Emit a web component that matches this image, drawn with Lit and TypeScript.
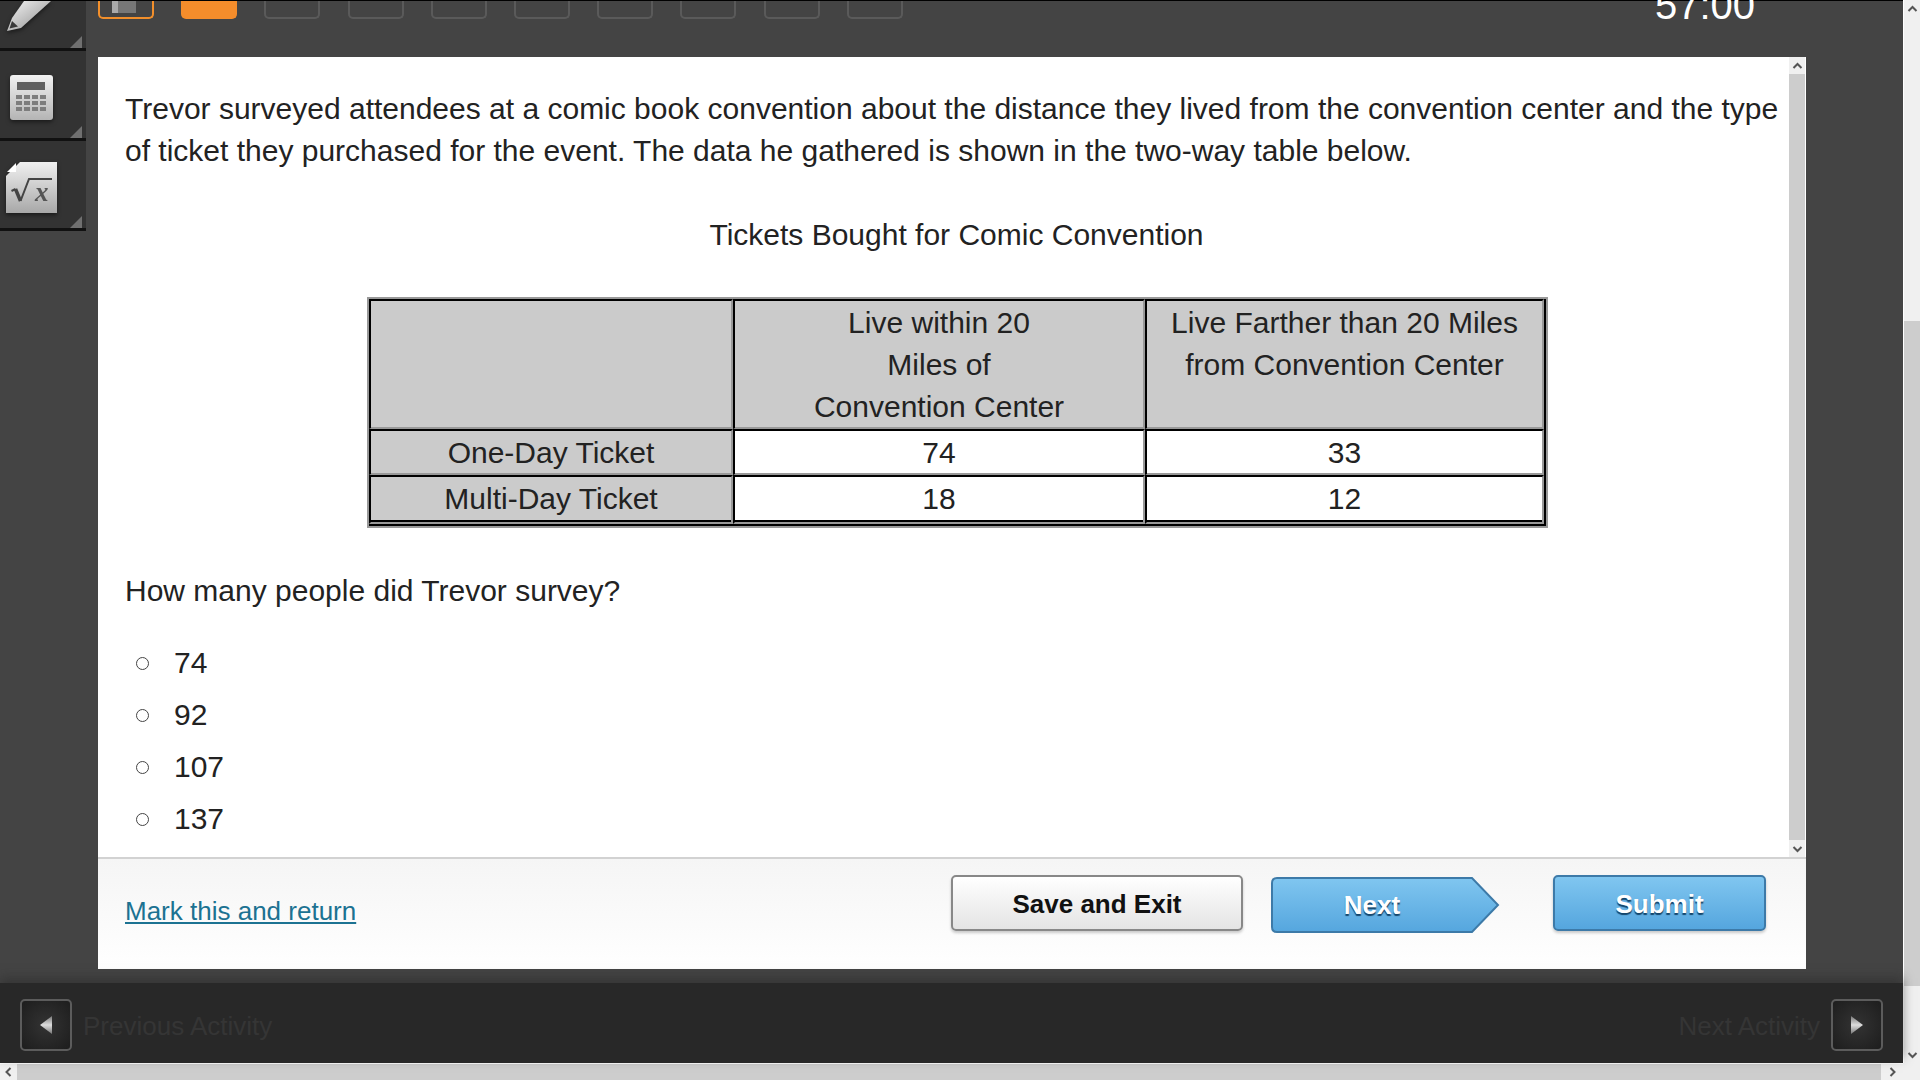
import { LitElement, html, css, svg } from 'lit';
import { customElement } from 'lit/decorators.js';

const chevron = (rot: number) => html`<svg width="11" height="8" viewBox="0 0 11 8" style="transform: rotate(${rot}deg)">
  <path d="M1.5 6 L5.5 2 L9.5 6" fill="none" stroke="#555" stroke-width="2"></path>
</svg>`;

const pencil = svg`<svg class="icon" width="54" height="30" viewBox="0 0 54 30">
  <defs><linearGradient id="pen" x1="0" y1="0" x2="1" y2="1"><stop offset="0" stop-color="#f6f6f6"></stop><stop offset="1" stop-color="#8a8a8a"></stop></linearGradient></defs>
  <path d="M18 0 H45 L15 27 L1 30 L6 17 Z" fill="url(#pen)"></path>
  <path d="M6 20 L12 25.5 L3.5 27.5 Z" fill="#3a3a3a"></path>
</svg>`;

const calc = svg`<svg class="icon" width="43" height="45" viewBox="0 0 43 45">
  <defs><linearGradient id="cal" x1="0" y1="0" x2="0" y2="1"><stop offset="0" stop-color="#f2f2f2"></stop><stop offset="1" stop-color="#b4b4b4"></stop></linearGradient></defs>
  <rect x="0" y="0" width="43" height="45" rx="3" fill="url(#cal)"></rect>
  <rect x="7" y="7" width="28" height="8" fill="#606060"></rect>
  ${[20, 26, 32].map(y => [6, 14, 22, 30].map(x => svg`<rect x=${x} y=${y} width="6" height="4" fill="#7d7d7d"></rect>`))}
</svg>`;

const sqrt = svg`<svg class="icon" width="51" height="51" viewBox="0 0 51 51">
  <defs><linearGradient id="sq" x1="0" y1="0" x2="0" y2="1"><stop offset="0" stop-color="#f0f0f0"></stop><stop offset="1" stop-color="#a8a8a8"></stop></linearGradient></defs>
  <path d="M14 0 H51 V51 H0 V14 Z" fill="url(#sq)"></path>
  <path d="M1 10 L10 1 V10 Z" fill="#fff"></path>
  <path d="M5.5 29 L9.5 27 M14.5 39 L23 17 H46" fill="none" stroke="#444" stroke-width="2"></path>
  <path d="M9.5 27 L14.5 39" fill="none" stroke="#444" stroke-width="3.5"></path>
  <text x="29" y="39" font-family="Liberation Serif, serif" font-style="italic" font-weight="700" font-size="27" fill="#555">x</text>
</svg>`;

const navArrow = (left: boolean) => svg`<svg width="12" height="18" viewBox="0 0 12 18">
  <defs><linearGradient id="na" x1="0" y1="0" x2="0" y2="1"><stop offset="0" stop-color="#777"></stop><stop offset=".5" stop-color="#ddd"></stop><stop offset="1" stop-color="#777"></stop></linearGradient></defs>
  <path d=${left ? 'M12 0 V18 L0 9 Z' : 'M0 0 V18 L12 9 Z'} fill="url(#na)"></path>
</svg>`;

@customElement('app-root')
export class AppRoot extends LitElement {
  static styles = css`
    :host {
      display: block;
      width: 1920px;
      height: 1080px;
      overflow: hidden;
      font-family: "Liberation Sans", Arial, sans-serif;
      background: #f0f0f0;
    }
    .frame { display: grid; grid-template-columns: 1903px 17px; grid-template-rows: 1063px 17px; height: 1080px; }

    .viewport { display: flex; flex-direction: column; background: #444; border-top: 1px solid #000; box-sizing: border-box; min-height: 0; }
    .workspace { flex: 1; display: flex; min-height: 0; }

    .tools { width: 86px; flex: none; display: flex; flex-direction: column; }
    .tool {
      height: 90px;
      box-sizing: border-box;
      background: #333;
      border-bottom: 3px solid #111;
      position: relative;
      display: flex;
      align-items: center;
      padding: 6px 0 0 6px;
    }
    .tool.first { height: 50px; align-items: flex-start; padding-top: 0; overflow: hidden; }
    .tool::after {
      content: '';
      position: absolute;
      right: 4px;
      bottom: 0;
      border-style: solid;
      border-width: 0 0 12px 12px;
      border-color: transparent transparent #707070 transparent;
    }
    .tool.calc { padding: 5px 0 0 10px; }
    .icon { filter: drop-shadow(0 2px 2px rgba(0, 0, 0, .5)); }

    .main { flex: 1; display: flex; flex-direction: column; padding: 0 97px 14px 12px; min-width: 0; position: relative; }
    .tabs { height: 56px; flex: none; display: flex; gap: 27.2px; align-items: flex-start; }
    .tab {
      width: 56px;
      height: 18px;
      box-sizing: border-box;
      border: 2px solid #5a5a5a;
      border-top: none;
      border-radius: 0 0 5px 5px;
      position: relative;
    }
    .tab.current { border-color: #f28f2b; }
    .tab.current::after {
      content: '';
      position: absolute;
      left: 12px;
      top: 0;
      width: 24px;
      height: 12px;
      background: linear-gradient(90deg, #aaa 0 6px, #777 6px);
    }
    .tab.flagged { background: #f58d2b; border-color: #f58d2b; }
    .timer {
      position: absolute;
      top: -16px;
      right: 148px;
      color: #fff;
      font-size: 40px;
      line-height: 40px;
    }

    .card { flex: 1; display: flex; flex-direction: column; background: #fff; min-height: 0; }
    .pane { flex: 1; display: flex; min-height: 0; }
    .content { flex: 1; padding: 31px 1px 0 27px; color: #222; font-size: 30px; line-height: 42px; min-width: 0; overflow: hidden; }
    .content p { margin: 0; }
    .content p.title { text-align: center; margin: 42px 0 41px; }
    .table-wrap { padding: 2px 0 2px 244px; }
    table {
      border-collapse: separate;
      border-spacing: 0;
      border: solid #000;
      border-width: 0 2px 2px 0;
      outline: 2px solid #999;
      width: 1177px;
      text-align: center;
      table-layout: fixed;
    }
    col.c1 { width: 364px; }
    col.c2 { width: 412px; }
    td {
      padding: 1px 0 0;
      border: solid;
      border-width: 2px 2px 1px;
      border-color: #000 #999 #999 #000;
      box-shadow: inset 0 -1px #999;
      background: #fff;
      vertical-align: top;
    }
    td.head { background: #cbcbcb; }
    tr.last td { padding-bottom: 2px; border-bottom-width: 2px; box-shadow: inset 0 -2px #000; }
    .content p.question { margin: 42px 0 25px; }
    .choice { display: flex; align-items: center; height: 52px; }
    .radio { width: 11px; height: 11px; border: 1px solid #444; border-radius: 50%; margin: 0 25px 0 11px; }
    .choice span { line-height: 52px; }

    .pane-bar { width: 16px; margin-right: 1px; flex: none; display: flex; flex-direction: column; background: #f0f0f0; }
    .arrow { height: 17px; display: flex; align-items: center; justify-content: center; flex: none; }
    .thumb { flex: 1; background: #cdcdcd; }

    .footer {
      height: 112px;
      flex: none;
      box-sizing: border-box;
      border-top: 2px solid #d2d2d2;
      background: linear-gradient(#f5f5f5, #fff);
      display: flex;
      align-items: flex-start;
      padding: 16px 40px 0 27px;
    }
    .mark { color: #1c7292; font-size: 26px; text-decoration: underline; margin-top: 21px; line-height: 30px; }
    .spacer { flex: 1; }
    .btn {
      box-sizing: border-box;
      height: 56px;
      padding-top: 2px;
      font-size: 26px;
      font-weight: 700;
      display: flex;
      align-items: center;
      justify-content: center;
      border-radius: 5px;
    }
    .save {
      width: 292px;
      color: #111;
      border: 2px solid #888;
      background: linear-gradient(#fff, #e4e4e4);
      box-shadow: 0 2px 3px rgba(0, 0, 0, .2);
      margin-right: 28px;
    }
    .next { width: 229px; padding-top: 0; margin: 2px 53px 0 0; position: relative; justify-content: flex-start; }
    .next svg { position: absolute; inset: 0; }
    .next span { position: relative; display: block; width: 202px; text-align: center; }
    .next, .submit { color: #fff; text-shadow: 0 2px 1px #14456b; }
    .submit {
      width: 213px;
      padding-top: 3px;
      border: 2px solid #3d7aa8;
      background: linear-gradient(#80c6f0, #55a6de);
      box-shadow: 0 2px 3px rgba(0, 0, 0, .2);
    }

    .activity {
      height: 80px;
      flex: none;
      box-sizing: border-box;
      background: #282828;
      box-shadow: 0 -5px 10px rgba(40, 40, 40, .5);
      position: relative;
      display: flex;
      align-items: center;
      justify-content: space-between;
      padding: 3px 20px 0;
      color: #353535;
      font-size: 26px;
    }
    .activity div { display: flex; align-items: center; gap: 11px; }
    .activity span.label { padding-top: 3px; }
    .nav {
      width: 52px;
      height: 52px;
      box-sizing: border-box;
      border: 2px solid #5c5c5c;
      border-radius: 5px;
      background: radial-gradient(#333, #1d1d1d);
      display: flex;
      align-items: center;
      justify-content: center;
    }

    .vscroll { display: flex; flex-direction: column; background: #f0f0f0; border-left: 1px solid #fff; box-sizing: border-box; min-height: 0; }
    .vscroll .top-gap { height: 304px; flex: none; }
    .vscroll .thumb { flex: none; height: 665px; }
    .vscroll .rest { flex: 1; display: flex; flex-direction: column; justify-content: flex-end; }
    .hscroll { display: flex; background: #f0f0f0; border-top: 1px solid #fff; box-sizing: border-box; }
    .hscroll .arrow { width: 17px; height: auto; }
    .hscroll .thumb { flex: 1; }
    .hscroll .arrow.end { width: 22px; }
    .corner { background: #f0f0f0; }
  `;

  render() {
    const tabs = Array.from({ length: 10 });
    const choices = ['74', '92', '107', '137'];
    return html`
      <div class="frame">
        <div class="viewport">
          <div class="workspace">
            <div class="tools">
              <div class="tool first">${pencil}</div>
              <div class="tool calc">${calc}</div>
              <div class="tool">${sqrt}</div>
            </div>
            <div class="main">
              <div class="tabs">
                ${tabs.map((_, i) => html`<div class="tab ${i === 0 ? 'current' : i === 1 ? 'flagged' : ''}"></div>`)}
              </div>
              <div class="timer">57:00</div>
              <div class="card">
                <div class="pane">
                  <div class="content">
                    <p>Trevor surveyed attendees at a comic book convention about the distance they lived from the convention center and the type of ticket they purchased for the event. The data he gathered is shown in the two-way table below.</p>
                    <p class="title">Tickets Bought for Comic Convention</p>
                    <div class="table-wrap">
                      <table>
                        <colgroup><col class="c1" /><col class="c2" /><col /></colgroup>
                        <tr>
                          <td class="head"></td>
                          <td class="head">Live within 20<br />Miles of<br />Convention Center</td>
                          <td class="head">Live Farther than 20 Miles<br />from Convention Center</td>
                        </tr>
                        <tr><td class="head">One-Day Ticket</td><td>74</td><td>33</td></tr>
                        <tr class="last"><td class="head">Multi-Day Ticket</td><td>18</td><td>12</td></tr>
                      </table>
                    </div>
                    <p class="question">How many people did Trevor survey?</p>
                    ${choices.map(c => html`<div class="choice"><i class="radio"></i><span>${c}</span></div>`)}
                  </div>
                  <div class="pane-bar">
                    <div class="arrow">${chevron(0)}</div>
                    <div class="thumb"></div>
                    <div class="arrow">${chevron(180)}</div>
                  </div>
                </div>
                <div class="footer">
                  <a class="mark">Mark this and return</a>
                  <div class="spacer"></div>
                  <div class="btn save">Save and Exit</div>
                  <div class="btn next">
                    <svg width="229" height="56" viewBox="0 0 229 56">
                      <defs><linearGradient id="nx" x1="0" y1="0" x2="0" y2="1"><stop offset="0" stop-color="#80c6f0"></stop><stop offset="1" stop-color="#55a6de"></stop></linearGradient></defs>
                      <path d="M6 1 H201 L227 28 L201 55 H6 Q1 55 1 50 V6 Q1 1 6 1 Z" fill="url(#nx)" stroke="#3d7aa8" stroke-width="2"></path>
                    </svg>
                    <span>Next</span>
                  </div>
                  <div class="btn submit">Submit</div>
                </div>
              </div>
            </div>
          </div>
          <div class="activity">
            <div><span class="nav">${navArrow(true)}</span><span class="label">Previous Activity</span></div>
            <div><span class="label">Next Activity</span><span class="nav">${navArrow(false)}</span></div>
          </div>
        </div>
        <div class="vscroll">
          <div class="arrow">${chevron(0)}</div>
          <div class="top-gap"></div>
          <div class="thumb"></div>
          <div class="rest"><div class="arrow">${chevron(180)}</div></div>
        </div>
        <div class="hscroll">
          <div class="arrow">${chevron(-90)}</div>
          <div class="thumb"></div>
          <div class="arrow end">${chevron(90)}</div>
        </div>
        <div class="corner"></div>
      </div>
    `;
  }
}
